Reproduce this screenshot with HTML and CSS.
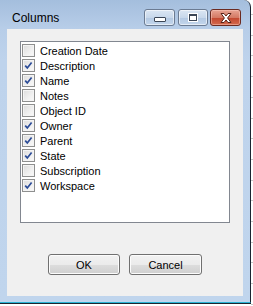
FILE: index.html
```html
<!DOCTYPE html>
<html lang="en">
<head>
    <meta charset="UTF-8">
    <title>Columns</title>
    <link rel="stylesheet" href="styles.css">
</head>
<body>
    <div class="window">
        <div class="titlebar">
            <span class="title">Columns</span>
            <div class="caption-buttons">
                <span class="cap-btn cap-min"><span class="glyph-min"></span></span>
                <span class="cap-btn cap-max"><span class="glyph-max"></span></span>
                <span class="cap-btn cap-close">
                    <svg width="16" height="12" viewBox="0 0 16 12">
                        <path d="M3 1.5 L6 1.5 L8 4 L10 1.5 L13 1.5 L9.6 6 L13 10.5 L10 10.5 L8 8 L6 10.5 L3 10.5 L6.4 6 Z" fill="#fff" stroke="#5a2318" stroke-width="1" stroke-linejoin="round"/>
                    </svg>
                </span>
            </div>
        </div>
        <div class="client">
            <ul class="column-list">
                <li><span class="box"></span>Creation Date</li>
                <li><span class="box checked"></span>Description</li>
                <li><span class="box checked"></span>Name</li>
                <li><span class="box"></span>Notes</li>
                <li><span class="box"></span>Object ID</li>
                <li><span class="box checked"></span>Owner</li>
                <li><span class="box checked"></span>Parent</li>
                <li><span class="box checked"></span>State</li>
                <li><span class="box"></span>Subscription</li>
                <li><span class="box checked"></span>Workspace</li>
            </ul>
            <div class="actions">
                <button class="btn btn-ok">OK</button>
                <button class="btn btn-cancel">Cancel</button>
            </div>
        </div>
    </div>
    <div class="desk-edge"></div>
</body>
</html>
```

FILE: styles.css
```css
body {
    margin: 0;
    background: #fff;
    display: flex;
    align-items: flex-start;
    font-family: "Liberation Sans", Arial, sans-serif;
    font-size: 11px;
    color: #000;
}
.window {
    width: 250px;
    height: 302px;
    border-right: 1px solid #1c2430;
    border-bottom: 1px solid #2ab4d6;
    box-shadow: 0 1px 0 #1c2430;
    border-radius: 0 7px 0 0;
    background: linear-gradient(to bottom, #a4bedd 0, #b7cde8 28px, #bed3ec 60px, #c0d5ed 100%);
    display: flex;
    flex-direction: column;
}
.titlebar {
    height: 29px;
    display: flex;
    align-items: flex-start;
    justify-content: space-between;
    padding: 0 9px 0 12px;
}
.title {
    font-size: 12px;
    line-height: 12px;
    margin-top: 12px;
}
.caption-buttons {
    display: flex;
    gap: 2px;
    margin-top: 9px;
}
.cap-btn {
    height: 15px;
    width: 29px;
    border: 1px solid #6b7b92;
    border-radius: 3px;
    display: flex;
    align-items: center;
    justify-content: center;
    background: linear-gradient(to bottom, #dbe6f3 0, #c8d8eb 50%, #b3c8e2 51%, #c3d6ec 100%);
    box-shadow: inset 0 0 0 1px rgba(255, 255, 255, 0.55);
}
.cap-min {
    margin-right: 1px;
}
.cap-max {
    width: 28px;
}
.cap-close {
    border-color: #6b2a20;
    background: linear-gradient(to bottom, #e8a493 0, #d47a64 50%, #c2462e 51%, #d46a4e 100%);
    box-shadow: inset 0 0 0 1px rgba(255, 210, 200, 0.45);
}
.glyph-min {
    width: 10px;
    height: 3px;
    margin-top: 3px;
    border: 1px solid #3b4656;
    background: #fff;
    border-radius: 1px;
}
.glyph-max {
    width: 6px;
    height: 4px;
    border: 1px solid #3b4656;
    border-top-width: 2px;
    background: #fff;
    box-shadow: 0 0 0 1px #fff;
}
.client {
    margin: 0 7px;
    height: 267px;
    background: #f0f0f0;
    padding: 12px 13px 0 13px;
    box-sizing: border-box;
}
.column-list {
    list-style: none;
    margin: 0;
    padding: 1px 0 0 1px;
    height: 182px;
    box-sizing: border-box;
    background: #fff;
    border: 1px solid #828790;
}
.column-list li {
    height: 15px;
    display: flex;
    align-items: center;
    gap: 5px;
}
.box {
    width: 11px;
    height: 11px;
    border: 1px solid #8e8f8f;
    background: linear-gradient(135deg, #dcdcdc 0, #f0f0f0 60%, #fafafa 100%);
    box-shadow: inset 0 0 0 1px #f4f4f4;
    flex: none;
}
.box.checked {
    background-image: url("data:image/svg+xml,%3Csvg xmlns='http://www.w3.org/2000/svg' width='11' height='11' viewBox='0 0 11 11'%3E%3Cpath d='M2.2 5.6 L4.3 7.9 L8.6 2.4' fill='none' stroke='%232d4d98' stroke-width='1.7'/%3E%3C/svg%3E"), linear-gradient(135deg, #dcdcdc 0, #f0f0f0 60%, #fafafa 100%);
}
.actions {
    display: flex;
    justify-content: center;
    gap: 9px;
    margin-top: 31px;
}
.btn {
    height: 21px;
    padding: 0;
    font-family: "Liberation Sans", Arial, sans-serif;
    font-size: 11px;
    color: #000;
    border: 1px solid #707070;
    border-radius: 3px;
    background: linear-gradient(to bottom, #f2f2f2 0, #ebebeb 50%, #dddddd 51%, #cfcfcf 100%);
    box-shadow: inset 0 0 0 1px #fcfcfc;
}
.btn-ok {
    width: 72px;
}
.btn-cancel {
    width: 73px;
}
.desk-edge {
    width: 2px;
    height: 306px;
    background: repeating-linear-gradient(to bottom, transparent 0, transparent 14px, #c8c8c8 14px, #c8c8c8 15px, transparent 15px, transparent 20.7px);
}
```
